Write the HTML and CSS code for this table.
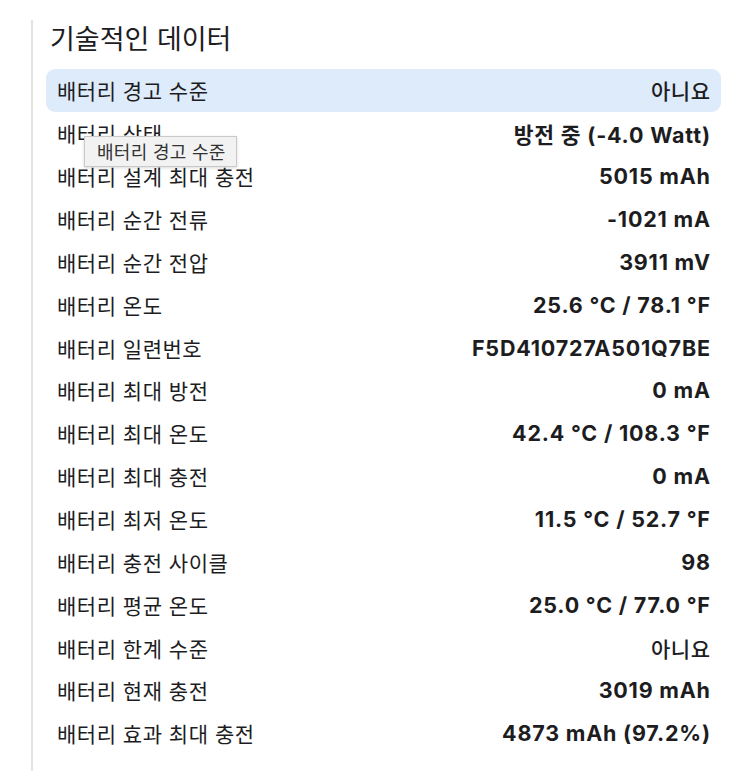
FILE: index.html
```html
<!DOCTYPE html>
<html lang="ko">
<head>
<meta charset="utf-8">
<link rel="stylesheet" href="styles.css">
</head>
<body>
<div class="panel">
  <h2 class="title">기술적인 데이터</h2>
  <div class="rows">
    <div class="row active"><span class="label">배터리 경고 수준</span><span class="value plain">아니요</span></div>
    <div class="row"><span class="label">배터리 상태</span><span class="value">방전 중 (-4.0 Watt)</span></div>
    <div class="row"><span class="label">배터리 설계 최대 충전</span><span class="value">5015 mAh</span></div>
    <div class="row"><span class="label">배터리 순간 전류</span><span class="value">-1021 mA</span></div>
    <div class="row"><span class="label">배터리 순간 전압</span><span class="value">3911 mV</span></div>
    <div class="row"><span class="label">배터리 온도</span><span class="value">25.6 °C / 78.1 °F</span></div>
    <div class="row"><span class="label">배터리 일련번호</span><span class="value">F5D410727A501Q7BE</span></div>
    <div class="row"><span class="label">배터리 최대 방전</span><span class="value">0 mA</span></div>
    <div class="row"><span class="label">배터리 최대 온도</span><span class="value">42.4 °C / 108.3 °F</span></div>
    <div class="row"><span class="label">배터리 최대 충전</span><span class="value">0 mA</span></div>
    <div class="row"><span class="label">배터리 최저 온도</span><span class="value">11.5 °C / 52.7 °F</span></div>
    <div class="row"><span class="label">배터리 충전 사이클</span><span class="value">98</span></div>
    <div class="row"><span class="label">배터리 평균 온도</span><span class="value">25.0 °C / 77.0 °F</span></div>
    <div class="row"><span class="label">배터리 한계 수준</span><span class="value plain">아니요</span></div>
    <div class="row"><span class="label">배터리 현재 충전</span><span class="value">3019 mAh</span></div>
    <div class="row"><span class="label">배터리 효과 최대 충전</span><span class="value">4873 mAh (97.2%)</span></div>
  </div>
</div>
<div class="tooltip">배터리 경고 수준</div>
</body>
</html>
```
FILE: styles.css
```css
html, body {
  margin: 0;
  padding: 0;
  background: #ffffff;
}
body {
  font-family: "Noto Sans CJK KR", "Noto Sans", "Liberation Sans", sans-serif;
  color: #1d1d1f;
  width: 750px;
  height: 771px;
  overflow: hidden;
  position: relative;
}
.panel {
  margin: 20px 0 0 31px;
  border-left: 2px solid #e3e3e3;
  padding: 0 29px 0 13px;
  min-height: 760px;
}
.title {
  margin: 0 0 13px 4px;
  font-size: 27px;
  line-height: 36px;
  font-weight: 400;
  color: #1d1d1f;
}
.rows {
  display: flex;
  flex-direction: column;
}
.row {
  height: 42.86px;
  display: flex;
  align-items: center;
  justify-content: space-between;
  padding: 0 11px;
  font-size: 21px;
  border-radius: 9px;
}
.row.active {
  background: #ddebfb;
}
.label {
  font-weight: 400;
  letter-spacing: 0.5px;
}
.value {
  font-family: "Inter", "Noto Sans CJK KR", sans-serif;
  font-weight: 700;
  font-size: 21.5px;
  letter-spacing: 0.8px;
  margin-right: -0.8px;
}
.value.plain {
  font-family: "Noto Sans CJK KR", sans-serif;
  font-weight: 500;
  font-size: 21px;
  letter-spacing: 0.5px;
  margin-right: -0.5px;
}
.tooltip {
  position: absolute;
  left: 84px;
  top: 136px;
  width: 139px;
  height: 29px;
  background: #f2f2f2;
  border: 1px solid #c9c9c9;
  box-shadow: 0 1px 3px rgba(0,0,0,0.15);
  font-size: 18px;
  letter-spacing: 0.3px;
  line-height: 29px;
  padding-left: 12px;
  color: #333333;
  white-space: nowrap;
}
```
